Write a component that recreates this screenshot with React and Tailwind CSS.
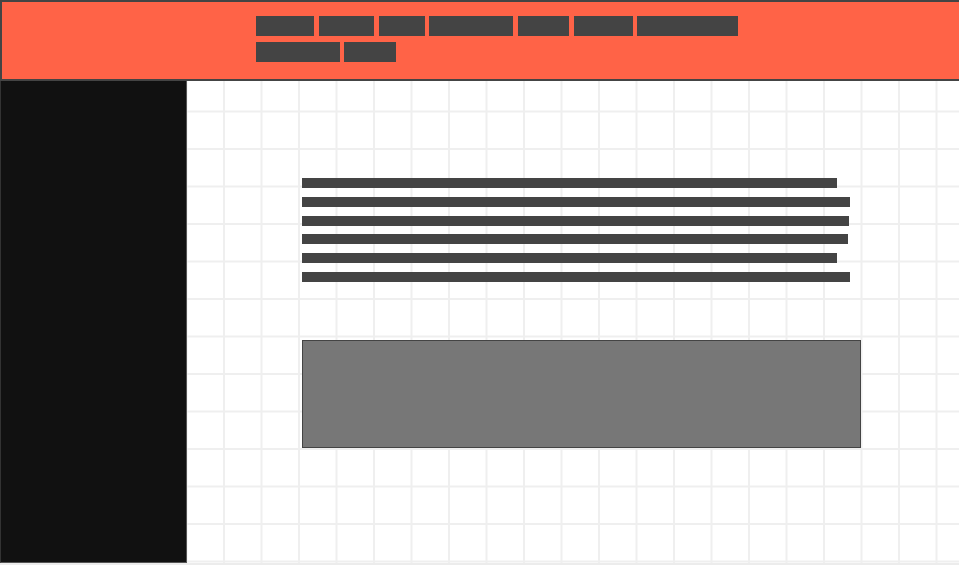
// [gap before, width] for each redacted nav label
const navRows = [
  [[0, 58], [5, 55], [5, 46], [4, 84], [5, 51], [5, 59], [4, 101]],
  [[0, 84], [4, 52]],
];

const bars = [535, 548, 547, 546, 535, 548];

function Header() {
  return (
    <header className="h-[81px] border-2 border-r-0 border-[#444] bg-[#ff6347] pt-[14px] pl-[254px]">
      <nav className="flex flex-col gap-[6px]">
        {navRows.map((row, i) => (
          <div key={i} className="flex">
            {row.map(([gap, w], j) => (
              <span
                key={j}
                className="block h-[20px] bg-[#444]"
                style={{ width: w, marginLeft: gap }}
              />
            ))}
          </div>
        ))}
      </nav>
    </header>
  );
}

export default function App() {
  return (
    <div className="min-h-screen bg-[#ececec] font-['Liberation_Sans',sans-serif]">
      <Header />
      <div className="flex h-[482px]">
        <aside className="w-[187px] shrink-0 border-x border-b border-l-[#333] border-r-[#555] border-b-[#555] bg-[#111]" />
        <main className="flex-1 bg-white bg-fixed bg-[linear-gradient(to_right,transparent_35.5px,#efefef_35.5px),linear-gradient(to_bottom,transparent_35.5px,#efefef_35.5px)] bg-[size:37.5px_37.5px] pl-[115px] pt-[97px]">
          <div className="flex flex-col gap-[8.8px]">
            {bars.map((w, i) => (
              <div key={i} className="h-[10px] bg-[#444]" style={{ width: w }} />
            ))}
          </div>
          <div className="mt-[58px] h-[108px] w-[559px] border border-[#444] bg-[#777]" />
        </main>
      </div>
    </div>
  );
}
